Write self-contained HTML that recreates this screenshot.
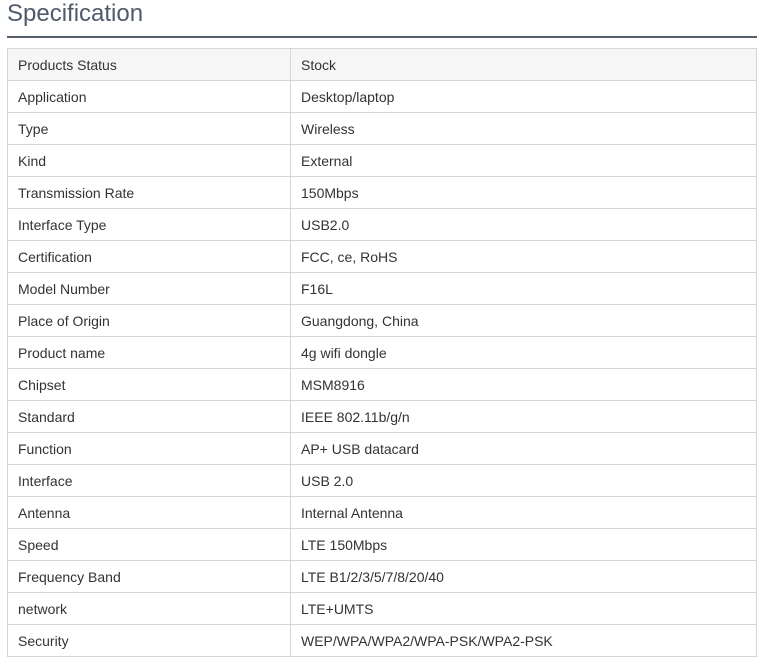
<!DOCTYPE html>
<html><head><meta charset="utf-8"><style>
body{margin:0;background:#fff;font-family:"Liberation Sans",Arial,sans-serif;}
h2{position:absolute;left:7px;top:-2px;margin:0;font-weight:normal;font-size:24px;color:#4f5b6b;line-height:32px;}
.line{position:absolute;left:7px;top:36px;width:750px;height:2px;background:#555e6b;}
table{position:absolute;left:7px;top:48px;width:750px;border-collapse:collapse;font-size:14px;color:#333;}
td{border:1px solid #d6d6d6;height:32px;padding:0 0 0 10px;box-sizing:border-box;}
td:first-child{width:283px;}
tr:first-child td{background:#f6f6f6;}
</style></head><body>
<h2>Specification</h2><div class="line"></div>
<table>
<tr><td>Products Status</td><td>Stock</td></tr>
<tr><td>Application</td><td>Desktop/laptop</td></tr>
<tr><td>Type</td><td>Wireless</td></tr>
<tr><td>Kind</td><td>External</td></tr>
<tr><td>Transmission Rate</td><td>150Mbps</td></tr>
<tr><td>Interface Type</td><td>USB2.0</td></tr>
<tr><td>Certification</td><td>FCC, ce, RoHS</td></tr>
<tr><td>Model Number</td><td>F16L</td></tr>
<tr><td>Place of Origin</td><td>Guangdong, China</td></tr>
<tr><td>Product name</td><td>4g wifi dongle</td></tr>
<tr><td>Chipset</td><td>MSM8916</td></tr>
<tr><td>Standard</td><td>IEEE 802.11b/g/n</td></tr>
<tr><td>Function</td><td>AP+ USB datacard</td></tr>
<tr><td>Interface</td><td>USB 2.0</td></tr>
<tr><td>Antenna</td><td>Internal Antenna</td></tr>
<tr><td>Speed</td><td>LTE 150Mbps</td></tr>
<tr><td>Frequency Band</td><td>LTE B1/2/3/5/7/8/20/40</td></tr>
<tr><td>network</td><td>LTE+UMTS</td></tr>
<tr><td>Security</td><td>WEP/WPA/WPA2/WPA-PSK/WPA2-PSK</td></tr>
</table>
</body></html>
